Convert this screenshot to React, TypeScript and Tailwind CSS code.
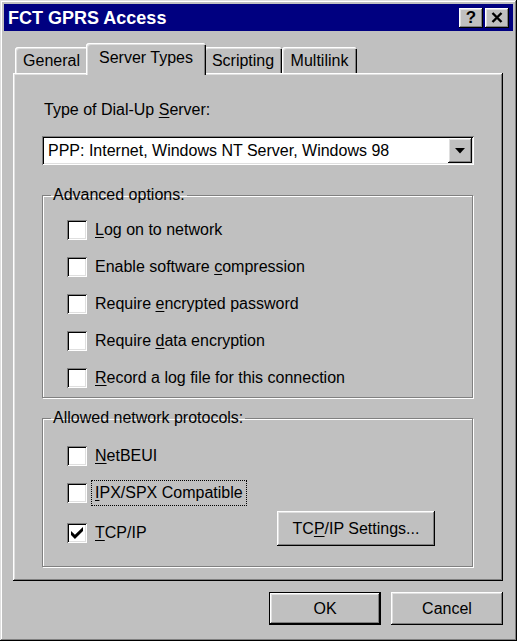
import React from "react";

const font = "font-['Liberation_Sans',Arial,sans-serif]";
const raised =
  "shadow-[inset_-1px_-1px_0_#000,inset_1px_1px_0_#fff,inset_-2px_-2px_0_#808080,inset_2px_2px_0_#dfdfdf]";
const sunken =
  "shadow-[inset_1px_1px_0_#808080,inset_-1px_-1px_0_#fff,inset_2px_2px_0_#000,inset_-2px_-2px_0_#dfdfdf]";

function U({ children }: { children: React.ReactNode }) {
  return <span className="underline underline-offset-[2px] decoration-1">{children}</span>;
}

function CheckBox({ checked }: { checked?: boolean }) {
  return (
    <span className={`w-[20px] h-[20px] bg-white shrink-0 flex items-center justify-center ${sunken}`}>
      {checked && (
        <svg width="12" height="12" viewBox="0 0 7 7">
          <path d="M0 2.3 L2.3 4.5 L7 0 L7 2.4 L2.3 7 L0 4.7 Z" fill="#000" />
        </svg>
      )}
    </span>
  );
}

function Option({ label, checked, focus }: { label: React.ReactNode; checked?: boolean; focus?: boolean }) {
  return (
    <div className="h-[37px] flex items-center gap-[8px]">
      <CheckBox checked={checked} />
      <span className={`leading-[18px] ${focus ? "[outline:1px_dotted_#000] outline-offset-[3px]" : ""}`}>{label}</span>
    </div>
  );
}

function Tab({ label, width, active }: { label: string; width: string; active?: boolean }) {
  return (
    <div
      className={`${width} ${
        active ? "relative z-10 -mx-[2px] -mb-[2px] h-[32px] bg-[#c0c0c0] pt-[6px]" : "h-[26px] pt-[5px]"
      } rounded-t-[3px] shadow-[inset_1px_1px_0_#fff,inset_2px_2px_0_#dfdfdf,inset_-1px_0_0_#000,inset_-2px_0_0_#808080] flex justify-center`}
    >
      <span className="leading-[18px]">{label}</span>
    </div>
  );
}

export default function App() {
  return (
    <div
      className={`${font} text-[16px] text-black w-[517px] h-[641px] bg-[#c0c0c0] p-[4px] flex flex-col shadow-[inset_-1px_-1px_0_#000,inset_1px_1px_0_#dfdfdf,inset_-2px_-2px_0_#808080,inset_2px_2px_0_#fff]`}
    >
      {/* title bar */}
      <div className="h-[27px] bg-[#000080] flex items-center px-[4px]">
        <span className="text-white font-bold text-[18px] leading-[20px]">FCT GPRS Access</span>
        <div className="ml-auto flex gap-[2px]">
          <div className={`w-[24px] h-[20px] bg-[#c0c0c0] ${raised} flex items-center justify-center font-bold text-[17px] leading-[17px]`}>
            ?
          </div>
          <div className={`w-[24px] h-[20px] bg-[#c0c0c0] ${raised} flex items-center justify-center`}>
            <svg width="12" height="11" viewBox="0 0 12 11">
              <path d="M1.5 1 L10.5 10 M10.5 1 L1.5 10" stroke="#000" strokeWidth="2.4" />
            </svg>
          </div>
        </div>
      </div>

      <div className="pl-[9px] pr-[10px] pt-[12px]">
        {/* tabs */}
        <div className="h-[30px] flex items-end pl-[2px]">
          <Tab label="General" width="w-[73px]" />
          <Tab label="Server Types" width="w-[120px]" active />
          <Tab label="Scripting" width="w-[78px]" />
          <Tab label="Multilink" width="w-[75px]" />
        </div>

        {/* panel */}
        <div className={`h-[508px] ${raised} px-[29px] pt-[28px]`}>
          <div className="leading-[18px] pl-[2px]">
            Type of Dial-Up <U>S</U>erver:
          </div>

          <div className={`mt-[17px] h-[29px] bg-white p-[2px] flex ${sunken}`}>
            <div className="flex-1 flex items-center pl-[4px] leading-[18px]">
              PPP: Internet, Windows NT Server, Windows 98
            </div>
            <div className={`w-[24px] h-full bg-[#c0c0c0] ${raised} flex items-center justify-center`}>
              <svg width="10" height="6" viewBox="0 0 10 6">
                <path d="M0 0 H10 L5 5.5 Z" fill="#000" />
              </svg>
            </div>
          </div>

          <fieldset className="mt-[21px] mr-[1px] border border-[#808080] shadow-[1px_1px_0_#fff,inset_1px_1px_0_#fff] pt-[7px] pb-[1px]">
            <legend className="ml-[8px] px-[2px] leading-[18px]">Advanced options:</legend>
            <div className="pl-[24px]">
              <Option label={<><U>L</U>og on to network</>} />
              <Option label={<>Enable software <U>c</U>ompression</>} />
              <Option label={<>Require <U>e</U>ncrypted password</>} />
              <Option label={<>Require <U>d</U>ata encryption</>} />
              <Option label={<><U>R</U>ecord a log file for this connection</>} />
            </div>
          </fieldset>

          <fieldset className="mt-[11px] mr-[1px] border border-[#808080] shadow-[1px_1px_0_#fff,inset_1px_1px_0_#fff] pt-[10px] pb-[11px]">
            <legend className="ml-[8px] px-[2px] leading-[18px]">Allowed network protocols:</legend>
            <div className="pl-[24px]">
              <Option label={<><U>N</U>etBEUI</>} />
              <Option label={<><U>I</U>PX/SPX Compatible</>} focus />
              <div className="flex items-center">
                <Option label={<><U>T</U>CP/IP</>} checked />
                <div
                  className={`ml-auto mr-[37px] mb-[9px] w-[158px] h-[35px] ${raised} flex items-center justify-center leading-[18px]`}
                >
                  TC<U>P</U>/IP Settings...
                </div>
              </div>
            </div>
          </fieldset>
        </div>
      </div>

      {/* dialog buttons */}
      <div className="mt-[11px] pr-[10px] flex justify-end gap-[10px]">
        <div className="w-[112px] h-[33px] flex items-center justify-center shadow-[inset_0_0_0_1px_#000,inset_-2px_-2px_0_#000,inset_2px_2px_0_#fff,inset_-3px_-3px_0_#808080,inset_3px_3px_0_#dfdfdf]">
          OK
        </div>
        <div className={`w-[112px] h-[33px] flex items-center justify-center ${raised}`}>Cancel</div>
      </div>
    </div>
  );
}
